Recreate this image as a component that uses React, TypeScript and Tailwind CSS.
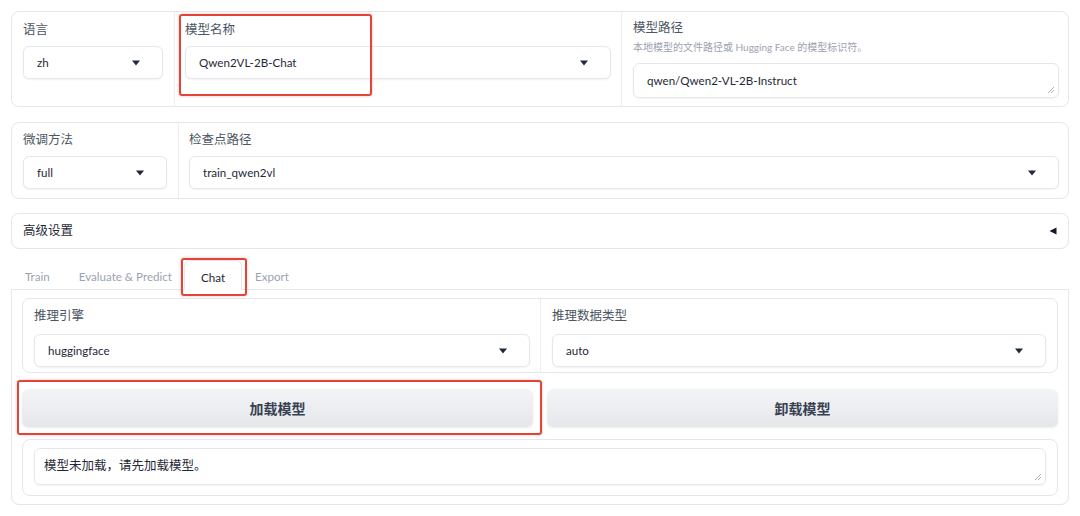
import React from 'react';

const font = { fontFamily: 'Lato, "Noto Sans CJK SC", sans-serif' };

function Caret() {
  return (
    <svg width="10" height="6" viewBox="0 0 10 6" className="shrink-0">
      <path d="M1 0.5h8L5 5.5z" fill="#1f2937" />
    </svg>
  );
}

function Dropdown({ value, className = '' }: { value: string; className?: string }) {
  return (
    <div
      className={`flex h-[33px] items-center justify-between rounded-md border border-[#e5e7eb] bg-white pl-[13px] pr-[21px] text-[11.6px] text-[#1f2937] shadow-[0_1px_2px_rgba(0,0,0,0.05)] ${className}`}
    >
      <span>{value}</span>
      <Caret />
    </div>
  );
}

function Resize() {
  return (
    <svg width="8" height="8" viewBox="0 0 8 8" className="absolute bottom-[3px] right-[3px]">
      <path d="M7 1L1 7M7 4L4 7" stroke="#9ca3af" strokeWidth="0.8" />
    </svg>
  );
}

function Label({ children }: { children: React.ReactNode }) {
  return <div className="h-[14px] text-[12.5px] leading-[14px] text-[#4b5563]">{children}</div>;
}

export default function App() {
  return (
    <div style={font} className="h-[516px] w-[1080px] overflow-hidden bg-white px-[11px] pt-[11px] text-[#1f2937]">
      {/* top block */}
      <div className="flex h-[96px] rounded-lg border border-[#e5e7eb] bg-white">
        <div className="w-[163px] shrink-0 border-r border-[#eceef1] pl-[11px] pr-[11px] pt-[11px]">
          <Label>语言</Label>
          <Dropdown value="zh" className="mt-[9px]" />
        </div>
        <div className="relative w-[447px] shrink-0 border-r border-[#eceef1] pl-[10px] pr-[10px] pt-[11px]">
          <Label>模型名称</Label>
          <Dropdown value="Qwen2VL-2B-Chat" className="mt-[9px]" />
          <div className="absolute left-[4px] top-[2px] h-[82px] w-[193px] rounded-[3px] border-2 border-[#e2443a] shadow-[0_0_3px_rgba(226,68,58,0.35)]" />
        </div>
        <div className="flex-1 pl-[11px] pr-[9px] pt-[9px]">
          <Label>模型路径</Label>
          <div className="mt-[6px] text-[10px] leading-[12px] text-[#9ca3af]">本地模型的文件路径或 Hugging Face 的模型标识符。</div>
          <div className="relative mt-[10px] flex h-[35px] items-center rounded-md border border-[#e5e7eb] pl-[13px] text-[11.6px] shadow-[0_1px_2px_rgba(0,0,0,0.05)]">
            qwen/Qwen2-VL-2B-Instruct
            <Resize />
          </div>
        </div>
      </div>

      {/* second block */}
      <div className="mt-[15px] flex h-[77px] rounded-lg border border-[#e5e7eb] bg-white">
        <div className="w-[167px] shrink-0 border-r border-[#eceef1] pl-[11px] pr-[11px] pt-[10px]">
          <Label>微调方法</Label>
          <Dropdown value="full" className="mt-[9px]" />
        </div>
        <div className="flex-1 pl-[10px] pr-[9px] pt-[10px]">
          <Label>检查点路径</Label>
          <Dropdown value="train_qwen2vl" className="mt-[9px]" />
        </div>
      </div>

      {/* accordion */}
      <div className="mt-[14px] flex h-[36px] items-center justify-between rounded-lg border border-[#e5e7eb] bg-white pl-[11px] pr-[11px]">
        <span className="text-[12.5px] text-[#1f2937]">高级设置</span>
        <svg width="8" height="8" viewBox="0 0 8 8">
          <path d="M7.5 0.5v7L0.5 4z" fill="#111827" />
        </svg>
      </div>

      {/* tabs */}
      <div className="relative mt-[11px] flex h-[29px] text-[11.6px]">
        <div className="flex items-center pl-[14px] pr-[29px] pt-[5px] text-[#9ca3af]">Train</div>
        <div className="flex items-center pt-[5px] text-[#9ca3af]">Evaluate &amp; Predict</div>
        <div className="relative z-10 -mb-px ml-[12px] flex h-[30px] w-[58px] items-center justify-center rounded-t-md border border-b-white border-[#e5e7eb] bg-white pt-[5px] text-[#1f2937]">
          Chat
        </div>
        <div className="flex items-center pl-[13px] pt-[5px] text-[#9ca3af]">Export</div>
        <div className="absolute left-[170px] -top-[2px] z-20 h-[38px] w-[66px] rounded-[3px] border-2 border-[#e2443a] shadow-[0_0_3px_rgba(226,68,58,0.35)]" />
      </div>

      {/* tab panel */}
      <div className="h-[216px] rounded-b-lg border border-[#e5e7eb] bg-white pl-[10px] pr-[10px] pt-[8px]">
        <div className="flex h-[75px] rounded-lg border border-[#e5e7eb]">
          <div className="w-[518px] shrink-0 border-r border-[#eceef1] pl-[11px] pr-[10px] pt-[10px]">
            <Label>推理引擎</Label>
            <Dropdown value="huggingface" className="mt-[11px]" />
          </div>
          <div className="flex-1 pl-[11px] pr-[11px] pt-[10px]">
            <Label>推理数据类型</Label>
            <Dropdown value="auto" className="mt-[11px]" />
          </div>
        </div>

        <div className="relative mt-[16px] flex gap-[14px]">
          <div className="flex h-[38px] w-[511px] items-center justify-center rounded-md bg-gradient-to-b from-[#f3f4f6] to-[#e6e7eb] text-[14px] font-bold text-[#374151] shadow-[0_1px_2px_rgba(0,0,0,0.08)]">
            加载模型
          </div>
          <div className="flex h-[38px] flex-1 items-center justify-center rounded-md bg-gradient-to-b from-[#f3f4f6] to-[#e6e7eb] text-[14px] font-bold text-[#374151] shadow-[0_1px_2px_rgba(0,0,0,0.08)]">
            卸载模型
          </div>
          <div className="absolute -left-[5px] -top-[9px] h-[55px] w-[525px] rounded-[3px] border-2 border-[#e2443a] shadow-[0_0_3px_rgba(226,68,58,0.35)]" />
        </div>

        <div className="mt-[12px] h-[57px] rounded-lg border border-[#e5e7eb] px-[11px] pt-[8px]">
          <div className="relative flex h-[37px] items-center rounded-md border border-[#e5e7eb] pl-[9px] text-[12.5px] text-[#1f2937] shadow-[0_1px_2px_rgba(0,0,0,0.05)]">
            模型未加载，请先加载模型。
            <Resize />
          </div>
        </div>
      </div>
    </div>
  );
}
